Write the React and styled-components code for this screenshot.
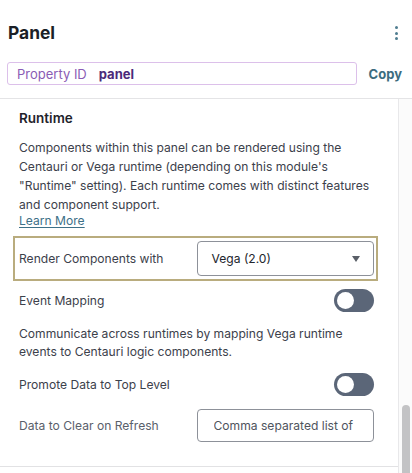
import React from "react";
import styled, { createGlobalStyle } from "styled-components";

const Global = createGlobalStyle`
  html, body { margin: 0; padding: 0; background: #fff; }
  body { font-family: Inter, "Noto Sans", sans-serif; overflow: hidden; }
  * { box-sizing: border-box; }
`;

const Page = styled.div`
  width: 412px;
  height: 473px;
  display: flex;
  flex-direction: column;
  overflow: hidden;
  background: #fff;
`;

const Header = styled.header`
  padding: 20px 10px 13px 7px;
  border-bottom: 1px solid #e4e4e6;
  display: flex;
  flex-direction: column;
  gap: 16px;
`;

const TitleRow = styled.div`
  display: flex;
  align-items: center;
  justify-content: space-between;
  height: 26px;
`;

const Title = styled.h1`
  margin: 0 0 0 1px;
  font-size: 17.4px;
  font-weight: 700;
  color: #1b1f27;
  line-height: 26px;
`;

const Kebab = styled.button`
  border: 0;
  background: none;
  padding: 0;
  margin-right: 4px;
  display: flex;
  flex-direction: column;
  gap: 2.4px;
  align-items: center;
  cursor: pointer;
`;

const Dot = styled.span`
  width: 3px;
  height: 3px;
  border-radius: 50%;
  background: #4f7d90;
`;

const IdRow = styled.div`
  display: flex;
  align-items: center;
  gap: 12px;
`;

const IdField = styled.div`
  flex: 1;
  height: 23px;
  border: 1px solid #dcc0ea;
  border-radius: 3px;
  display: flex;
  align-items: center;
  padding-left: 9px;
  gap: 12px;
  font-size: 13px;
`;

const IdLabel = styled.span`
  color: #8a5cb4;
`;

const IdValue = styled.span`
  color: #4b2a7a;
  font-weight: 700;
`;

const CopyButton = styled.button`
  border: 0;
  background: none;
  padding: 0;
  font-family: inherit;
  font-size: 13px;
  font-weight: 700;
  color: #3c6c7e;
  cursor: pointer;
`;

const Body = styled.div`
  flex: 1;
  display: flex;
  min-height: 0;
`;

const Content = styled.div`
  flex: 1;
  border-right: 1px solid #e8e8ea;
  overflow: hidden;
`;

const Section = styled.section`
  padding: 9px 24px 24px 19px;
  border-bottom: 1px solid #e2e2e4;
  display: flex;
  flex-direction: column;
`;

const SectionTitle = styled.h2`
  margin: 0;
  font-size: 13.5px;
  font-weight: 600;
  line-height: 20px;
  color: #1f232b;
`;

const Text = styled.p`
  margin: ${(p) => p.$mt || 0}px 0 0;
  font-size: 12.1px;
  line-height: ${(p) => p.$lh || 19}px;
  color: #3c414b;
`;

const LearnMore = styled.a`
  display: block;
  font-size: 12.1px;
  line-height: 13px;
  color: #3d7088;
  text-decoration: underline;
  text-underline-offset: 2px;
  width: max-content;
`;

const Highlight = styled.div`
  margin: 9px -4px 0 -6px;
  padding: 3px 2px 3px 4px;
  border: 2px solid #b9ac7e;
`;

const FieldRow = styled.div`
  display: grid;
  grid-template-columns: 1fr 1fr;
  align-items: center;
  margin-top: ${(p) => p.$mt || 0}px;
`;

const ToggleRow = styled.div`
  display: flex;
  align-items: center;
  justify-content: space-between;
  margin-top: ${(p) => p.$mt || 0}px;
`;

const Label = styled.span`
  font-size: 12.1px;
  color: ${(p) => (p.$muted ? "#5a606b" : "#3c414b")};
`;

const Select = styled.div`
  height: 35px;
  border: 1px solid #8d9199;
  border-radius: 4px;
  display: flex;
  align-items: center;
  justify-content: space-between;
  padding: 0 13px 0 14px;
  font-size: 12.1px;
  color: #23262d;
`;

const Caret = styled.span`
  width: 0;
  height: 0;
  border-left: 4.5px solid transparent;
  border-right: 4.5px solid transparent;
  border-top: 6px solid #5a5f68;
`;

const Toggle = styled.div`
  width: 40px;
  height: 23px;
  border-radius: 12px;
  background: #5b6678;
  display: flex;
  align-items: center;
  padding-left: 3px;
`;

const Knob = styled.span`
  width: 17px;
  height: 17px;
  border-radius: 50%;
  background: #fff;
`;

const TextInput = styled.input`
  height: 33px;
  width: 100%;
  border: 1px solid #8d9199;
  border-radius: 4px;
  padding: 0 17px 0 16px;
  font-family: inherit;
  font-size: 12.1px;
  color: #23262d;
  outline: none;
  &::placeholder { color: #4f545d; opacity: 1; }
`;

const Scrollbar = styled.div`
  width: 13px;
  background: #fbfbfb;
  display: flex;
  flex-direction: column;
  align-items: center;
`;

const Thumb = styled.div`
  margin-top: 306px;
  width: 8px;
  flex: 1;
  border-radius: 4px 4px 0 0;
  background: #c3c3c5;
`;

export default function App() {
  return (
    <Page>
      <Global />
      <Header>
        <TitleRow>
          <Title>Panel</Title>
          <Kebab aria-label="More">
            <Dot />
            <Dot />
            <Dot />
          </Kebab>
        </TitleRow>
        <IdRow>
          <IdField>
            <IdLabel>Property ID</IdLabel>
            <IdValue>panel</IdValue>
          </IdField>
          <CopyButton>Copy</CopyButton>
        </IdRow>
      </Header>
      <Body>
        <Content>
          <Section>
            <SectionTitle>Runtime</SectionTitle>
            <Text $mt={10}>
              Components within this panel can be rendered using the Centauri or Vega runtime
              (depending on this module's "Runtime" setting). Each runtime comes with distinct
              features and component support.
            </Text>
            <LearnMore href="#">Learn More</LearnMore>
            <Highlight>
              <FieldRow>
                <Label>Render Components with</Label>
                <Select>
                  <span>Vega (2.0)</span>
                  <Caret />
                </Select>
              </FieldRow>
            </Highlight>
            <ToggleRow $mt={8}>
              <Label>Event Mapping</Label>
              <Toggle>
                <Knob />
              </Toggle>
            </ToggleRow>
            <Text $mt={13} $lh={18}>
              Communicate across runtimes by mapping Vega runtime events to Centauri logic
              components.
            </Text>
            <ToggleRow $mt={12}>
              <Label>Promote Data to Top Level</Label>
              <Toggle>
                <Knob />
              </Toggle>
            </ToggleRow>
            <FieldRow $mt={13}>
              <Label $muted>Data to Clear on Refresh</Label>
              <TextInput placeholder="Comma separated list of keys" />
            </FieldRow>
          </Section>
        </Content>
        <Scrollbar>
          <Thumb />
        </Scrollbar>
      </Body>
    </Page>
  );
}
